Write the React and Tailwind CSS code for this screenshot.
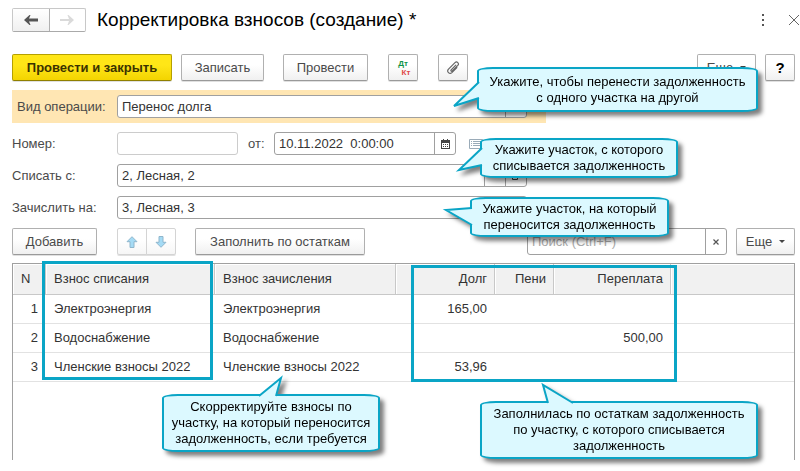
import clsx from 'clsx'

const rows = [
  { n: 1, from: 'Электроэнергия', to: 'Электроэнергия', debt: '165,00', fine: '', over: '' },
  { n: 2, from: 'Водоснабжение', to: 'Водоснабжение', debt: '', fine: '', over: '500,00' },
  { n: 3, from: 'Членские взносы 2022', to: 'Членские взносы 2022', debt: '53,96', fine: '', over: '' },
]

const tones = {
  plain: 'border-[#b0b0b0] border-b-[#9a9a9a] from-white to-[#f0f0f0]',
  muted: 'border-[#d4d4d4] from-white to-[#f6f6f6]',
  primary: 'border-[#b5a000] border-b-[#8f7f00] from-[#ffe617] to-[#f3d400] font-bold text-[#3a3200]',
}

function Button({ tone = 'plain', className, children, ...props }) {
  return (
    <button
      type="button"
      className={clsx(
        'flex h-[27px] shrink-0 items-center justify-center rounded-[2px] border bg-linear-to-b from-40% shadow-[0_1px_0_#e0e0e0]',
        tones[tone],
        className,
      )}
      {...props}
    >
      {children}
    </button>
  )
}

function Caret() {
  return (
    <svg width="6" height="3" viewBox="0 0 6 3" aria-hidden="true">
      <path d="M0 0h6L3 3z" fill="#444" />
    </svg>
  )
}

function Field({ className, children }) {
  return (
    <div className={clsx('flex h-[23px] overflow-hidden rounded-[3px] border border-[#a0a0a0] bg-white', className)}>
      {children}
    </div>
  )
}

function FieldButton({ label, children }) {
  return (
    <button type="button" aria-label={label} className="flex w-[21px] shrink-0 items-center justify-center border-l border-[#a0a0a0]">
      {children}
    </button>
  )
}

function PlotField({ id, label, value, children }) {
  return (
    <div className="relative flex w-[515px] items-center">
      <label htmlFor={id} className="w-[105px] shrink-0">{label}</label>
      <Field className="flex-1">
        <input id={id} defaultValue={value} className="min-w-0 flex-1 px-1 text-[#333] outline-none" />
        <FieldButton label="Выбрать"><Caret /></FieldButton>
        <FieldButton label="Открыть">
          <svg width="9" height="9" viewBox="0 0 9 9" fill="none" stroke="#444" aria-hidden="true">
            <path d="M3.5.5h5v5h-5zM2 3.5H.5v5h5V7" />
          </svg>
        </FieldButton>
      </Field>
      {children}
    </div>
  )
}

// tail is an open path in the callout's own coordinates, starting and ending on its border
function Callout({ className, tail, children }) {
  return (
    <div className={clsx('absolute z-10 drop-shadow-[4px_4px_2px_rgba(0,0,0,0.5)]', className)}>
      <div className="flex h-full items-center justify-center rounded-[16px/4px] border-2 border-[#0aa5c6] bg-[#dcf9ff] text-center leading-4 whitespace-nowrap text-black">
        <p>{children}</p>
      </div>
      <svg className="absolute top-0 left-0 h-px w-px overflow-visible" aria-hidden="true">
        <path d={tail} fill="#dcf9ff" stroke="#0aa5c6" strokeWidth="2" />
      </svg>
    </div>
  )
}

function Header() {
  return (
    <header className="flex h-6 items-center">
      <div className="flex h-6 w-[74px] rounded-[2px] border border-[#c8c8c8] border-b-[#aaa]">
        <button type="button" aria-label="Назад" className="flex flex-1 items-center justify-center border-r border-[#b0b0b0] bg-linear-to-b from-white to-[#f0f0f0]">
          <svg width="14" height="10" viewBox="0 0 14 10" aria-hidden="true">
            <path d="M6.500 0L5 3.500H14v3H5L6.500 10H5.500L0 5 5.500 0z" fill="#555" />
          </svg>
        </button>
        <button type="button" aria-label="Вперед" className="flex flex-1 items-center justify-center">
          <svg width="14" height="10" viewBox="0 0 14 10" aria-hidden="true">
            <path d="M7.500 0L9 4H0v2h9L7.500 10H8.500L14 5 8.500 0z" fill="#dadada" />
          </svg>
        </button>
      </div>
      <h1 className="ml-[11px] text-[19px] text-black">Корректировка взносов (создание) *</h1>
      <button type="button" aria-label="Меню" className="ml-auto">
        <svg width="4" height="12" viewBox="0 0 4 12" fill="#555" aria-hidden="true">
          <path d="M1 0h2v2H1zM1 5h2v2H1zM1 10h2v2H1z" />
        </svg>
      </button>
      <button type="button" aria-label="Закрыть" className="-mr-1 ml-6">
        <svg width="10" height="10" viewBox="0 0 10 10" stroke="#666" aria-hidden="true">
          <path d="M0 0l10 10M10 0L0 10" />
        </svg>
      </button>
    </header>
  )
}

function Toolbar() {
  return (
    <div className="mt-[13px] flex">
      <Button tone="primary" className="w-40">Провести и закрыть</Button>
      <Button className="ml-[9px] w-[83px]">Записать</Button>
      <Button className="ml-[19px] w-[85px]">Провести</Button>
      <Button className="ml-5 w-[30px]" aria-label="Дебет и кредит">
        <span className="flex flex-col text-[8px] leading-[9px] font-bold">
          <span className="text-[#0d9448]">Дт</span>
          <span className="pl-[6px] text-[#e04848]">Кт</span>
        </span>
      </Button>
      <Button className="ml-5 w-[30px]" aria-label="Файлы">
        <svg width="14" height="14" viewBox="0 0 14 14" fill="none" stroke="#666" strokeLinecap="round" aria-hidden="true">
          <path d="M9.8 4.2L5.2 8.9c-.8.9.3 1.9 1.1 1.1l5.5-5.6c1.8-2-.9-4.6-2.8-2.8L2.5 8.2c-2.2 2.4 1 5.6 3.4 3.4l5-5" strokeWidth="1.2" />
        </svg>
      </Button>
      <Button className="ml-auto w-[59px] gap-[7px]">Еще <Caret /></Button>
      <Button className="ml-[9px] w-[30px] text-[15px] font-bold text-black">?</Button>
    </div>
  )
}

function TableToolbar() {
  return (
    <div className="flex">
      <Button className="w-[85px]">Добавить</Button>
      <div className="ml-5 flex">
        <Button tone="muted" className="w-[30px] rounded-r-none" aria-label="Вверх">
          <svg width="12" height="12" viewBox="0 0 12 12" fill="#a5dbf5" stroke="#8fb6cc" aria-hidden="true">
            <path d="M6 .7l5 5H8v5.8H4V5.7H1z" />
          </svg>
        </Button>
        <Button tone="muted" className="-ml-px w-[30px] rounded-l-none" aria-label="Вниз">
          <svg width="12" height="12" viewBox="0 0 12 12" fill="#a5dbf5" stroke="#8fb6cc" aria-hidden="true">
            <path d="M6 11.3l5-5H8V.5H4v5.8H1z" />
          </svg>
        </Button>
      </div>
      <Button className="ml-[19px] w-[170px]">Заполнить по остаткам</Button>
      <Field className="ml-auto h-[27px] w-[200px]">
        <input type="text" aria-label="Поиск" placeholder="Поиск (Ctrl+F)" className="min-w-0 flex-1 px-1 outline-none placeholder:text-[#aaa]" />
        <FieldButton label="Очистить">
          <svg width="6" height="6" viewBox="0 0 6 6" stroke="#555" strokeWidth="1.2" aria-hidden="true">
            <path d="M.5.5l5 5M5.5.5l-5 5" />
          </svg>
        </FieldButton>
      </Field>
      <Button className="ml-[9px] w-[59px] gap-[7px]">Еще <Caret /></Button>
    </div>
  )
}

function FeesTable() {
  const head = 'border-r border-b border-[#c8c8c8] bg-[#f1f1f1] font-normal shadow-[inset_1px_1px_0_#fff]'
  return (
    <div className="relative -mt-px min-h-[197px] border border-b-0 border-[#a0a0a0]">
      <table className="w-full table-fixed border-separate border-spacing-0 text-[#333]">
        <colgroup>
          <col className="w-[33px]" />
          <col className="w-[169px]" />
          <col className="w-[181px]" />
          <col className="w-[99px]" />
          <col className="w-[59px]" />
          <col className="w-[117px]" />
          <col />
        </colgroup>
        <thead>
          <tr className="h-[31px]">
            <th className={clsx(head, 'pl-2 text-left')}>N</th>
            <th className={clsx(head, 'pl-2 text-left')}>Взнос списания</th>
            <th className={clsx(head, 'pl-2 text-left')}>Взнос зачисления</th>
            <th className={clsx(head, 'pr-[7px] text-right')}>Долг</th>
            <th className={clsx(head, 'pr-[7px] text-right')}>Пени</th>
            <th className={clsx(head, 'pr-[7px] text-right')}>Переплата</th>
            <td className="border-b border-[#c8c8c8] bg-[#f1f1f1] shadow-[inset_1px_1px_0_#fff]" />
          </tr>
        </thead>
        <tbody>
          {rows.map((row) => (
            <tr key={row.n} className="h-[29px] *:border-b *:border-[#e2e2e2]">
              <td className="pr-2 text-right">{row.n}</td>
              <td className="pl-2">{row.from}</td>
              <td className="pl-2">{row.to}</td>
              <td className="pr-2 text-right">{row.debt}</td>
              <td className="pr-2 text-right">{row.fine}</td>
              <td className="pr-2 text-right">{row.over}</td>
              <td />
            </tr>
          ))}
        </tbody>
      </table>

      <div className="pointer-events-none absolute -top-[3px] left-[29px] h-[119px] w-[171px] border-3 border-[#0aa5c6]" />
      <div className="pointer-events-none absolute top-px left-[398px] h-[117px] w-[266px] border-3 border-[#0aa5c6]" />

      <Callout className="top-[130px] left-[149px] h-[58px] w-[218px]" tail="M97 2L119 -16L114 2">
        Скорректируйте взносы по<br />участку, на который переносится<br />задолженность, если требуется
      </Callout>
      <Callout className="top-[137px] left-[467px] h-[58px] w-[278px]" tail="M68 2L63 -16L93 2">
        Заполнилась по остаткам задолженность<br />по участку, с которого списывается<br />задолженность
      </Callout>
    </div>
  )
}

export default function App() {
  return (
    <main className="flex flex-col gap-[9px] overflow-hidden bg-white pt-2 pr-[5px] pb-[11px] pl-3 font-['Liberation_Sans',Arial,sans-serif] text-[13px] leading-4 text-[#4a4a4a]">
      <Header />
      <Toolbar />

      <div className="relative flex h-[33px] w-[534px] items-center bg-[#ffe6b3] pr-[19px] pl-[5px]">
        <label htmlFor="operation" className="w-[100px] shrink-0">Вид операции:</label>
        <Field className="flex-1">
          <select id="operation" className="min-w-0 flex-1 appearance-none px-1 text-[#333] outline-none">
            <option>Перенос долга</option>
          </select>
          <span className="flex w-[21px] items-center justify-center border-l border-[#a0a0a0]"><Caret /></span>
        </Field>
        <Callout className="-top-[23px] left-[465px] h-[45px] w-[281px]" tail="M2 15L-23 39L2 31">
          Укажите, чтобы перенести задолженность<br />с одного участка на другой
        </Callout>
      </div>

      <div className="flex items-center">
        <label htmlFor="number" className="w-[105px] shrink-0">Номер:</label>
        <Field className="w-[121px] border-[#ccc]">
          <input id="number" className="min-w-0 flex-1 px-1 outline-none" />
        </Field>
        <label htmlFor="date" className="ml-[10px] w-[26px]">от:</label>
        <Field className="w-[182px]">
          <input id="date" defaultValue={'10.11.2022\u00a0 0:00:00'} className="min-w-0 flex-1 px-1 text-[#333] outline-none" />
          <FieldButton label="Календарь">
            <svg width="9" height="10" viewBox="0 0 9 10" aria-hidden="true">
              <path d="M0 1h9v9H0z" fill="#444" />
              <path d="M2.500 0v2M6.500 0v2" stroke="#444" />
              <path d="M1 4h7v5H1z" fill="#fff" />
              <path d="M2 5.500h5M2 7.500h5" stroke="#444" strokeDasharray="1 1" />
            </svg>
          </FieldButton>
        </Field>
        <svg className="ml-[13px]" width="14" height="10" viewBox="0 0 14 10" fill="none" stroke="#9aabb8" aria-hidden="true">
          <path d="M.5.5h13v9H.5zM2 2.500h1M4 2.500H12M2 4.500h1M4 4.500H12M2 6.500h1M4 6.500H12" />
        </svg>
      </div>

      <PlotField id="from" label="Списать с:" value="2, Лесная, 2">
        <Callout className="-top-[26px] left-[468px] h-10 w-[198px]" tail="M2 10L-21 32L2 27">
          Укажите участок, с которого<br />списывается задолженность
        </Callout>
      </PlotField>
      <PlotField id="to" label="Зачислить на:" value="3, Лесная, 3">
        <Callout className="top-px left-[458px] h-10 w-[199px]" tail="M2 11L-24 13L2 28">
          Укажите участок, на который<br />переносится задолженность
        </Callout>
      </PlotField>

      <TableToolbar />
      <FeesTable />
    </main>
  )
}
